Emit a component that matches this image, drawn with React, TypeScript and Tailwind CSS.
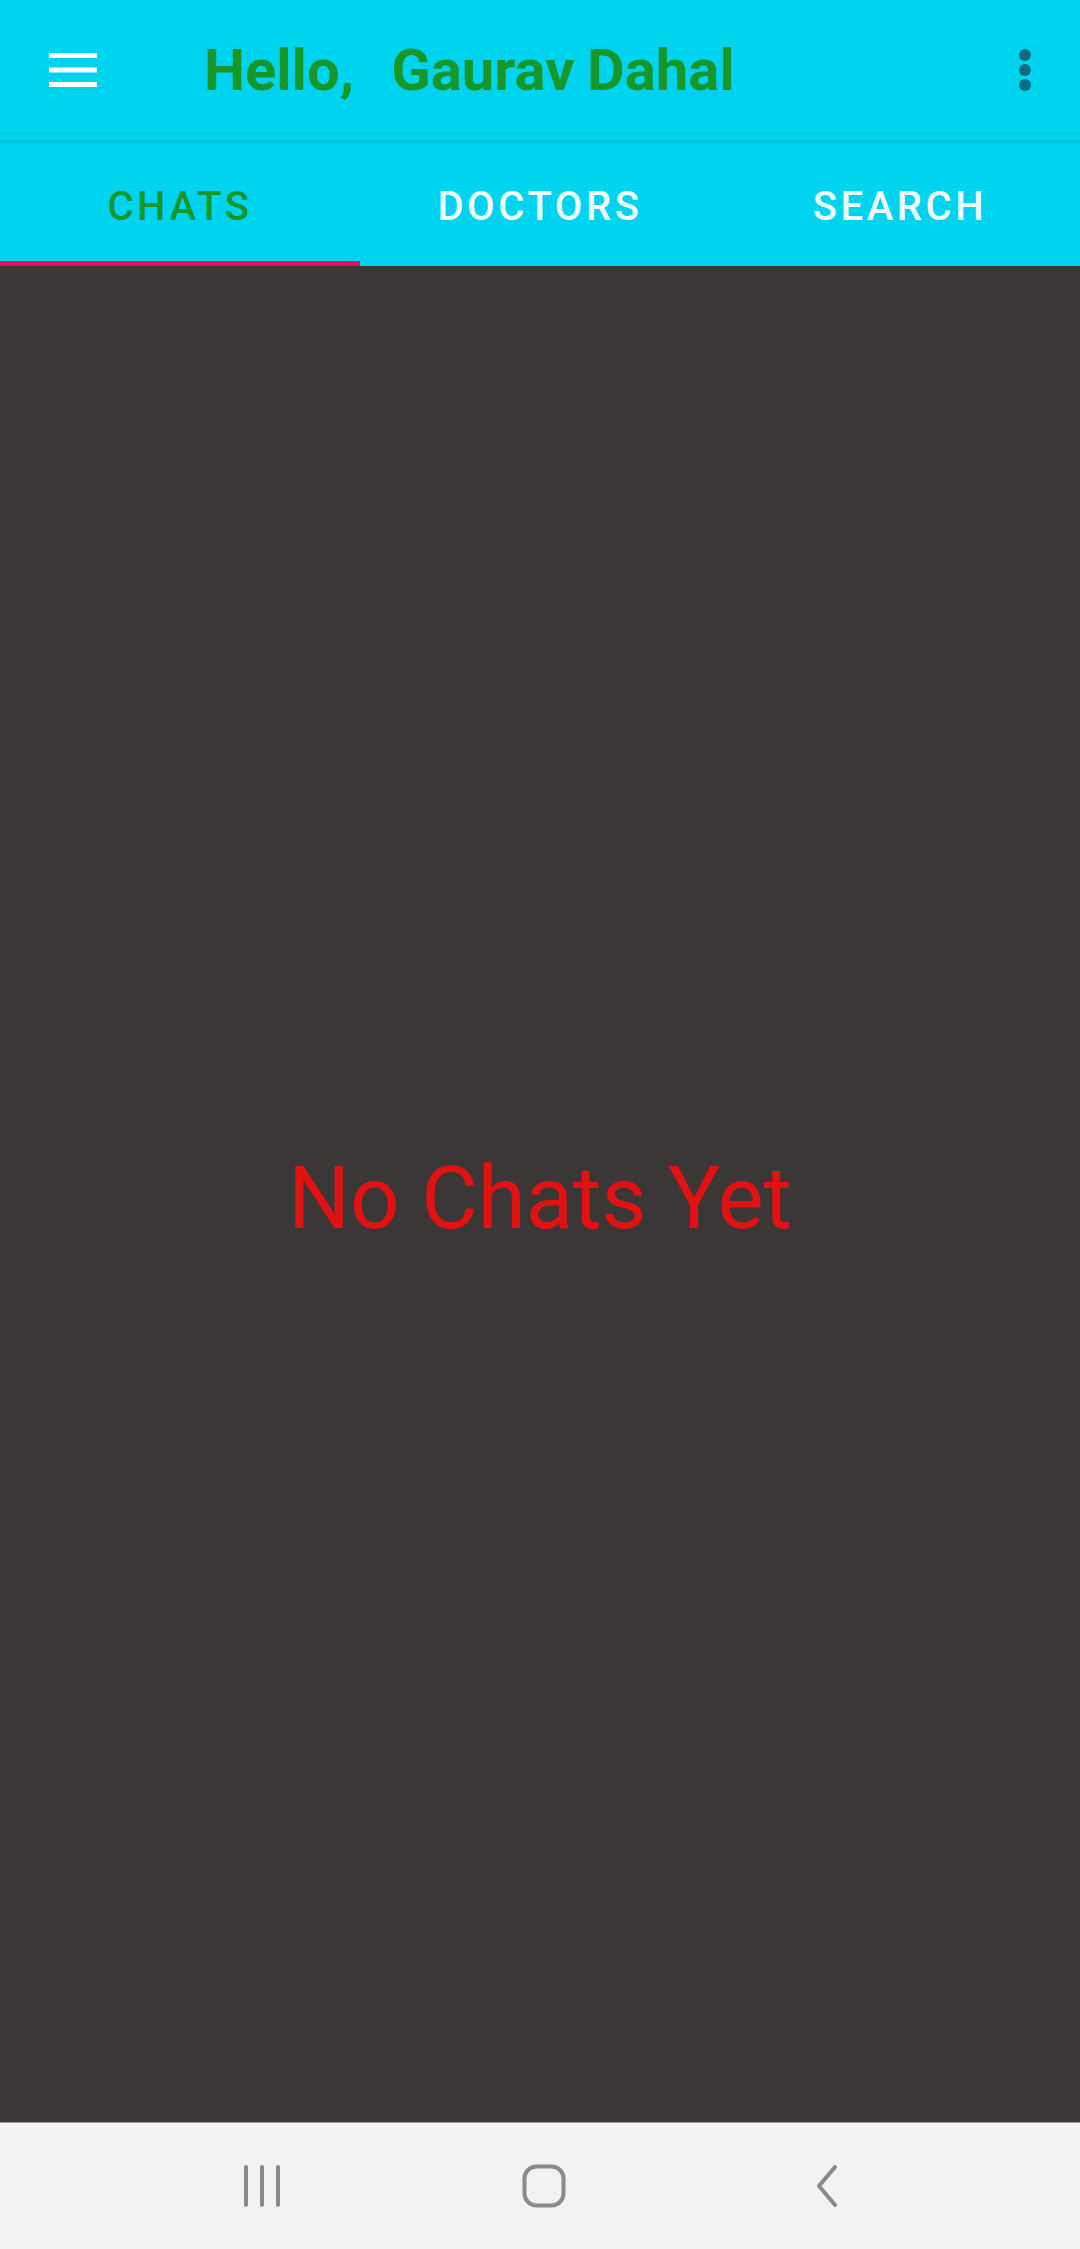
export default function App() {
    const tabs = ['CHATS', 'DOCTORS', 'SEARCH']

    return (
        <div className="w-[1080px] h-[2249px] flex flex-col bg-[#3b3737] font-['Roboto','Liberation_Sans',sans-serif]">
            {/* 툴바 */}
            <div className="h-[140px] bg-[#00d3ee] flex items-center relative z-10 shadow-[0_2px_3px_rgba(0,0,0,0.12)]">
                <div className="w-[204px] pl-[49px] flex items-center">
                    <svg width="48" height="34" viewBox="0 0 48 34">
                        <rect x="0" y="0" width="48" height="5" fill="#ffffff" />
                        <rect x="0" y="14.5" width="48" height="5" fill="#ffffff" />
                        <rect x="0" y="29" width="48" height="5" fill="#ffffff" />
                    </svg>
                </div>
                <h1 className="flex-1 text-[58px] font-bold text-[#17962a] leading-none whitespace-pre [word-spacing:-2px] mt-[-1px]">
                    Hello,   Gaurav Dahal
                </h1>
                <div className="w-[62px] flex items-center justify-start">
                    <svg width="14" height="44" viewBox="0 0 14 44">
                        <circle cx="7" cy="7" r="6" fill="#0b6a85" />
                        <circle cx="7" cy="22" r="6" fill="#0b6a85" />
                        <circle cx="7" cy="37" r="6" fill="#0b6a85" />
                    </svg>
                </div>
            </div>

            {/* 탭 */}
            <div className="h-[126px] bg-[#00d3ee] flex">
                {tabs.map((tab, i) => (
                    <div key={tab} className="flex-1 flex flex-col">
                        <div
                            className={
                                i === 0
                                    ? 'flex-1 flex items-center justify-center pt-[12px] text-[40px] font-medium tracking-[3.6px] text-[#17962a]'
                                    : 'flex-1 flex items-center justify-center pt-[12px] text-[40px] font-medium tracking-[3.6px] text-[#f2fbfc]'
                            }
                        >
                            {tab}
                        </div>
                        <div className={i === 0 ? 'h-[5px] bg-[#dd1558]' : 'h-[5px]'} />
                    </div>
                ))}
            </div>

            {/* 본문 */}
            <div className="flex-1 flex items-center justify-center pt-[9px]">
                <p className="text-[87px] text-[#e31212] leading-none">No Chats Yet</p>
            </div>

            {/* 하단 내비게이션 */}
            <div className="h-[127px] bg-[#f2f2f2] border-t border-[#9a9a9a] flex items-center pl-[121px]">
                <div className="w-[282px] flex justify-center">
                    <svg width="38" height="42" viewBox="0 0 38 42">
                        <path d="M3 2v38M19 2v38M35 2v38" stroke="#8a8a8a" strokeWidth="4" strokeLinecap="round" />
                    </svg>
                </div>
                <div className="w-[282px] flex justify-center">
                    <svg width="44" height="44" viewBox="0 0 44 44">
                        <rect x="2.5" y="2.5" width="39" height="39" rx="12" fill="none" stroke="#8a8a8a" strokeWidth="4" />
                    </svg>
                </div>
                <div className="w-[282px] flex justify-center">
                    <svg width="26" height="42" viewBox="0 0 26 42">
                        <path d="M22 2L6 21l16 19" fill="none" stroke="#8a8a8a" strokeWidth="4" strokeLinecap="round" strokeLinejoin="round" />
                    </svg>
                </div>
            </div>
        </div>
    )
}
